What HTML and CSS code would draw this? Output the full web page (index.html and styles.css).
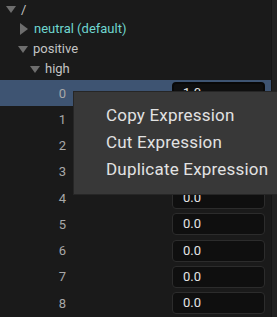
FILE: index.html
```html
<!DOCTYPE html>
<html lang="en">

<head>
  <meta charset="UTF-8">
  <meta name="viewport" content="width=device-width, initial-scale=1.0">
  <title>Expression Curves</title>
  <link rel="stylesheet" href="styles.css">
</head>

<body>
  <div class="panel">
    <div class="tree">
      <div class="node lvl0">
        <span class="arrow down"></span>
        <span class="label">/</span>
      </div>
      <div class="node lvl1">
        <span class="arrow right"></span>
        <span class="label default">neutral (default)</span>
      </div>
      <div class="node lvl1">
        <span class="arrow down"></span>
        <span class="label">positive</span>
      </div>
      <div class="node lvl2">
        <span class="arrow down"></span>
        <span class="label">high</span>
      </div>

      <div class="keys">
        <div class="key selected">
          <span class="idx">0</span>
          <span class="value">1.0</span>
        </div>
        <div class="key"><span class="idx">1</span><span class="value">0.0</span></div>
        <div class="key"><span class="idx">2</span><span class="value">0.0</span></div>
        <div class="key"><span class="idx">3</span><span class="value">0.0</span></div>
        <div class="key"><span class="idx">4</span><span class="value">0.0</span></div>
        <div class="key"><span class="idx">5</span><span class="value">0.0</span></div>
        <div class="key"><span class="idx">6</span><span class="value">0.0</span></div>
        <div class="key"><span class="idx">7</span><span class="value">0.0</span></div>
        <div class="key"><span class="idx">8</span><span class="value">0.0</span></div>
      </div>
    </div>
    <div class="scrollbar"></div>

    <!-- right-click menu over the key list -->
    <ul class="context-menu">
      <li>Copy Expression</li>
      <li>Cut Expression</li>
      <li>Duplicate Expression</li>
    </ul>
  </div>
</body>

</html>
```

FILE: styles.css
```css
html,
body {
  margin: 0;
  padding: 0;
  background-color: #1a1a1a;
}

body {
  font-family: Roboto, "Liberation Sans", sans-serif;
  width: 277px;
  height: 317px;
  overflow: hidden;
}

.panel {
  position: relative;
  display: flex;
  height: 317px;
}

.tree {
  flex: 1;
  overflow: hidden;
}

.scrollbar {
  width: 5px;
  border-left: 1px solid #151515;
  background-color: #212121;
}

.node {
  display: flex;
  align-items: center;
  height: 20px;
  font-size: 13px;
  color: #c4c4c4;
}

.node.lvl0 {
  padding-left: 6px;
  height: 19px;
}

.node.lvl1 {
  padding-left: 18px;
}

.node.lvl2 {
  padding-left: 30px;
}

.arrow {
  display: inline-block;
  width: 0;
  height: 0;
  margin-right: 5px;
}

.arrow.down {
  border-left: 5.5px solid transparent;
  border-right: 5.5px solid transparent;
  border-top: 7px solid #6e6e6e;
}

.arrow.right {
  margin-left: 2px;
  margin-right: 6px;
  border-top: 6.5px solid transparent;
  border-bottom: 6.5px solid transparent;
  border-left: 8px solid #6e6e6e;
}

.label {
  line-height: 20px;
}

.label.default {
  color: #6fd6cf;
}

.keys {
  margin-top: 1px;
}

.key {
  display: flex;
  align-items: center;
  height: 26.25px;
  font-size: 13px;
}

.key.selected {
  background-color: #3e5472;
}

.idx {
  width: 66px;
  text-align: right;
  color: #a8a8a8;
}

.value {
  box-sizing: border-box;
  margin-left: 106px;
  width: 93px;
  height: 22px;
  line-height: 20px;
  padding-left: 10px;
  color: #e4e4e4;
  background-color: #0f0f0f;
  border: 1px solid #2c2c2c;
  border-radius: 4px;
}

.key.selected .value {
  border: 2px solid #080808;
  line-height: 18px;
  padding-left: 9px;
}

.context-menu {
  position: absolute;
  left: 73px;
  top: 91px;
  width: 210px;
  margin: 0;
  padding: 10px 0 11px;
  list-style: none;
  background-color: #383838;
  border: 1px solid #262626;
  box-sizing: border-box;
  height: 104px;
}

.context-menu li {
  height: 27px;
  line-height: 27px;
  padding-left: 32px;
  font-size: 17px;
  letter-spacing: 0.2px;
  color: #e2e2e2;
  white-space: nowrap;
}
```
